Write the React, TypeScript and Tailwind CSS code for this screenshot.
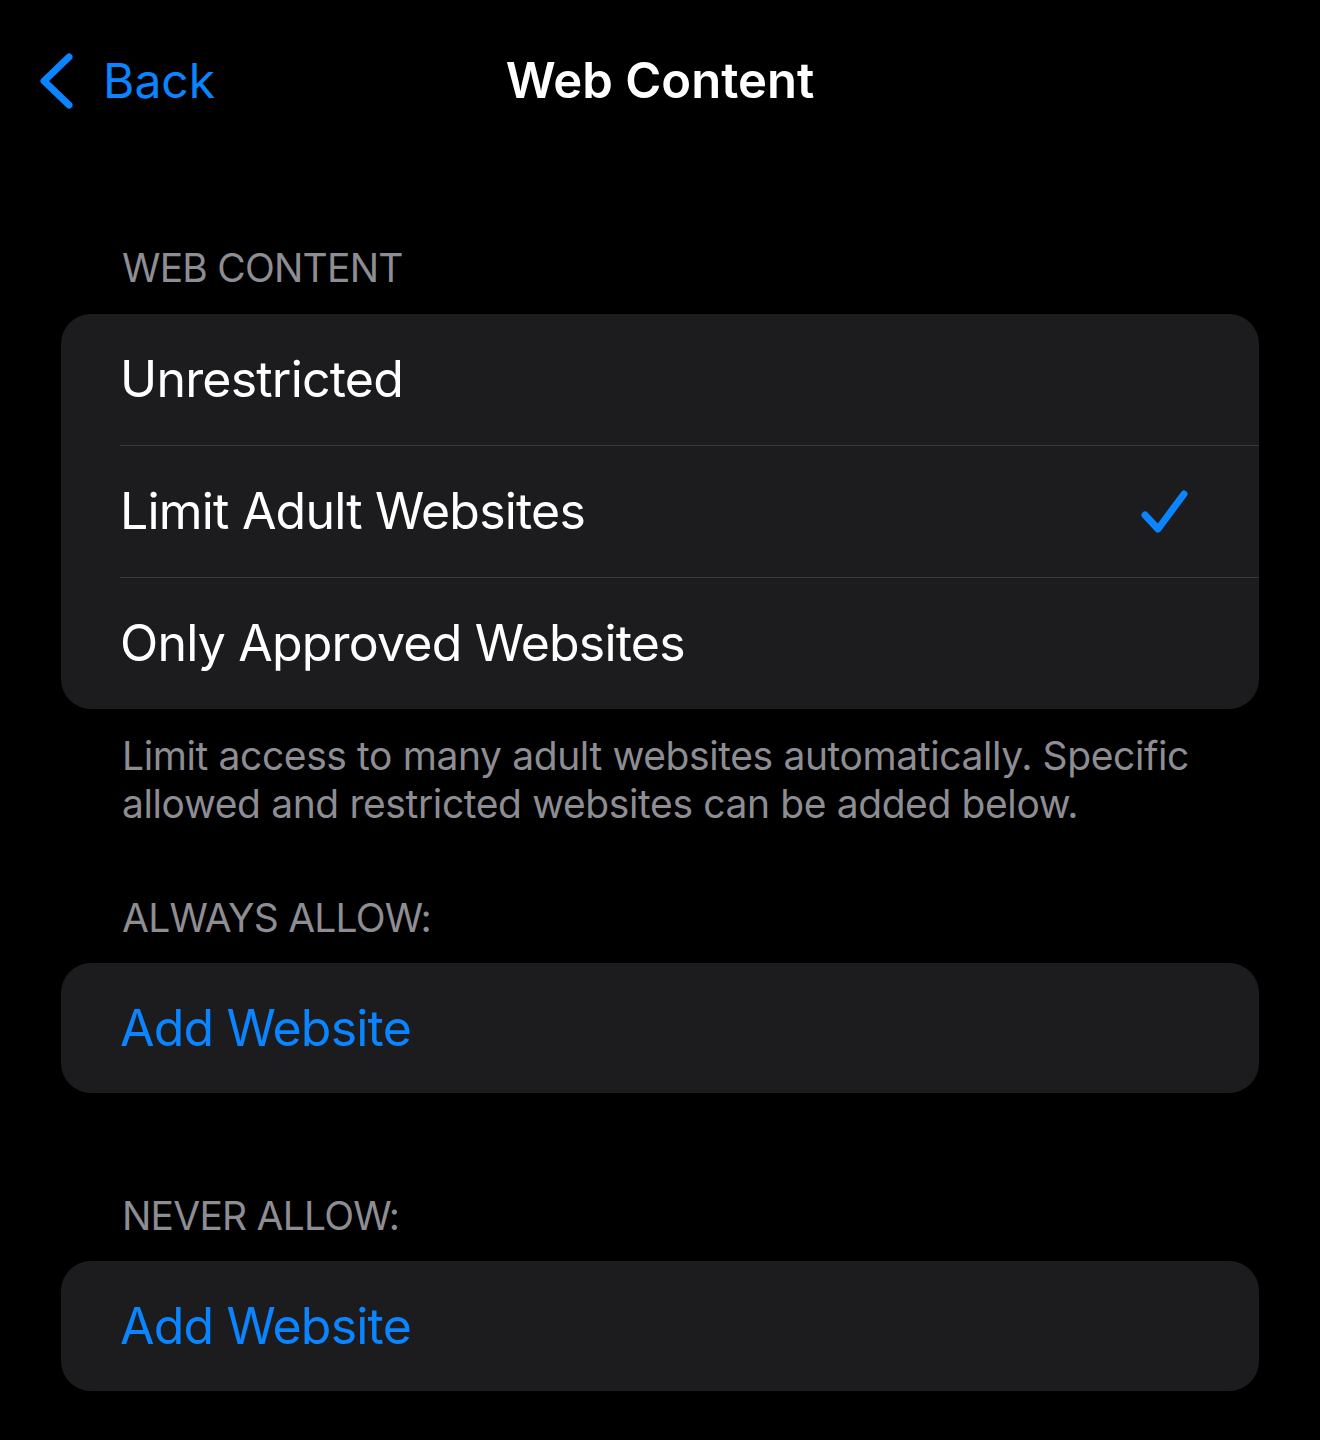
import React from "react";

const BLUE = "text-[#0a84ff]";

function Chevron() {
  return (
    <svg width="36" height="56" viewBox="0 0 36 56" fill="none">
      <path d="M31 4 L6 28 L31 52" stroke="#0a84ff" strokeWidth="7" strokeLinecap="round" strokeLinejoin="round" />
    </svg>
  );
}

function Check() {
  return (
    <svg width="50" height="48" viewBox="0 0 50 48" fill="none">
      <path d="M5 27 L18 41 L44 6" stroke="#0a84ff" strokeWidth="7" strokeLinecap="round" strokeLinejoin="round" />
    </svg>
  );
}

function SectionHeader({ children, className = "" }: { children: React.ReactNode; className?: string }) {
  return (
    <div className={`pl-[122px] text-[39px] leading-[48px] tracking-[-0.02em] text-[#8d8d93] ${className}`}>
      {children}
    </div>
  );
}

const options = ["Unrestricted", "Limit Adult Websites", "Only Approved Websites"];

export default function App() {
  const selected = 1;
  return (
    <div className="min-h-[1440px] w-[1320px] bg-black text-white" style={{ fontFamily: "Inter, 'Noto Sans', sans-serif" }}>
      {/* nav bar */}
      <div className="relative flex h-[162px] items-center">
        <div className="flex items-center pl-[38px]">
          <Chevron />
          <span className={`ml-[29px] text-[48px] ${BLUE}`}>Back</span>
        </div>
        <div className="absolute left-1/2 -translate-x-1/2 text-[49px] font-semibold">Web Content</div>
      </div>

      <SectionHeader className="mt-[82px]">WEB CONTENT</SectionHeader>

      <div className="mx-[61px] mt-[22px] rounded-[30px] bg-[#1c1c1e]">
        {options.map((o, i) => (
          <div key={o}>
            {i > 0 && <div className="ml-[59px] h-px bg-[#38383a]" />}
            <div className="flex h-[131px] items-center justify-between pl-[59px] pr-[69px]">
              <span className="text-[50px] tracking-[-0.016em]">{o}</span>
              {i === selected && <Check />}
            </div>
          </div>
        ))}
      </div>

      <div className="mt-[23px] pl-[122px] pr-[100px] text-[39px] leading-[48px] tracking-[-0.01em] text-[#8d8d93]">
        Limit access to many adult websites automatically. Specific allowed and restricted websites can be added below.
      </div>

      <SectionHeader className="mt-[66px]">ALWAYS ALLOW:</SectionHeader>
      <div className="mx-[61px] mt-[21px] flex h-[130px] items-center rounded-[30px] bg-[#1c1c1e] pl-[59px]">
        <span className={`text-[50px] tracking-[-0.016em] ${BLUE}`}>Add Website</span>
      </div>

      <SectionHeader className="mt-[99px]">NEVER ALLOW:</SectionHeader>
      <div className="mx-[61px] mt-[21px] flex h-[130px] items-center rounded-[30px] bg-[#1c1c1e] pl-[59px]">
        <span className={`text-[50px] tracking-[-0.016em] ${BLUE}`}>Add Website</span>
      </div>
    </div>
  );
}
